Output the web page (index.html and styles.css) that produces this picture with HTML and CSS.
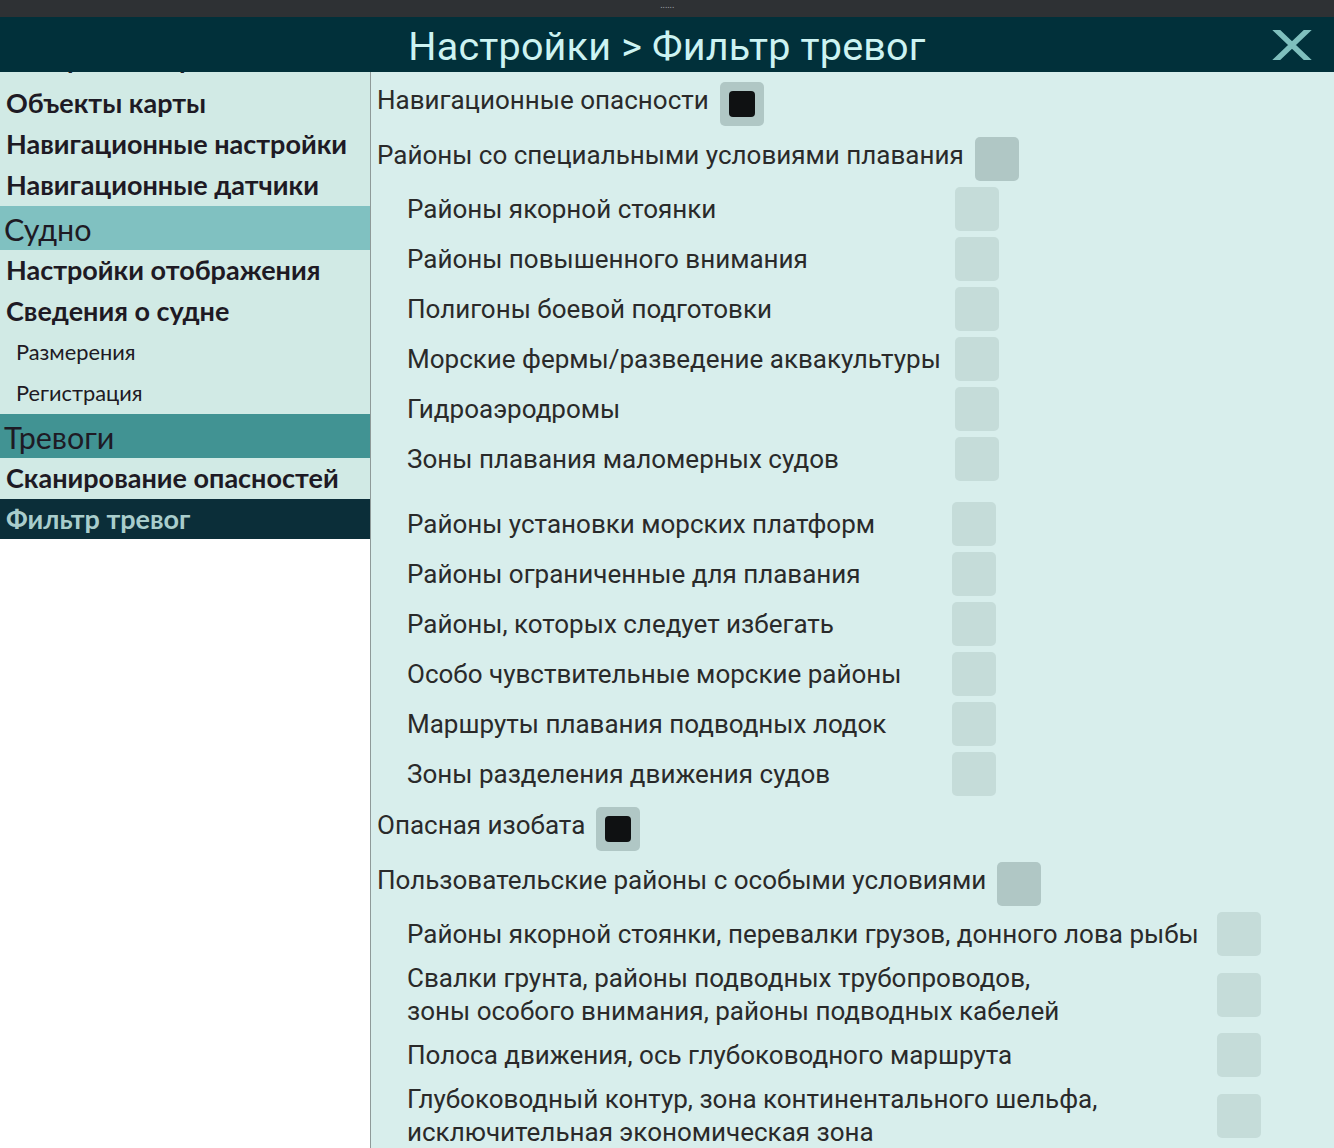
FILE: index.html
```html
<!DOCTYPE html>
<html lang="ru">
<head>
<meta charset="utf-8">
<title>Настройки &gt; Фильтр тревог</title>
<link rel="stylesheet" href="styles.css">
</head>
<body>
<div class="app">
  <div class="topstrip"><span class="grip">......</span></div>
  <header class="titlebar">
    <h1 class="title">Настройки &gt; Фильтр тревог</h1>
    <svg class="close" width="40" height="40" viewBox="0 0 40 40" aria-label="Закрыть">
      <defs><clipPath id="xclip"><rect x="0" y="5" width="40" height="30"/></clipPath></defs>
      <path d="M-1 0 L41 40 M41 0 L-1 40" stroke="#7fbfbd" stroke-width="5.5" fill="none" clip-path="url(#xclip)"/>
    </svg>
  </header>
  <div class="body">
    <nav class="sidebar">
      <div class="side-inner">
        <div class="item first">Настройки карты</div>
        <div class="item">Объекты карты</div>
        <div class="item">Навигационные настройки</div>
        <div class="item">Навигационные датчики</div>
        <div class="group g1">Судно</div>
        <div class="item">Настройки отображения</div>
        <div class="item">Сведения о судне</div>
        <div class="sub">Размерения</div>
        <div class="sub">Регистрация</div>
        <div class="group g2">Тревоги</div>
        <div class="item">Сканирование опасностей</div>
        <div class="item active">Фильтр тревог</div>
      </div>
    </nav>
    <main class="content">
      <div class="top-row r1"><span class="lbl">Навигационные опасности</span><span class="cb on"><span class="mark"></span></span></div>
      <div class="top-row r2"><span class="lbl">Районы со специальными условиями плавания</span><span class="cb"></span></div>
      <div class="list l1">
        <span class="lbl">Районы якорной стоянки</span><span class="cb sm"></span>
        <span class="lbl">Районы повышенного внимания</span><span class="cb sm"></span>
        <span class="lbl">Полигоны боевой подготовки</span><span class="cb sm"></span>
        <span class="lbl">Морские фермы/разведение аквакультуры</span><span class="cb sm"></span>
        <span class="lbl">Гидроаэродромы</span><span class="cb sm"></span>
        <span class="lbl">Зоны плавания маломерных судов</span><span class="cb sm"></span>
      </div>
      <div class="list l2">
        <span class="lbl">Районы установки морских платформ</span><span class="cb sm"></span>
        <span class="lbl">Районы ограниченные для плавания</span><span class="cb sm"></span>
        <span class="lbl">Районы, которых следует избегать</span><span class="cb sm"></span>
        <span class="lbl">Особо чувствительные морские районы</span><span class="cb sm"></span>
        <span class="lbl">Маршруты плавания подводных лодок</span><span class="cb sm"></span>
        <span class="lbl">Зоны разделения движения судов</span><span class="cb sm"></span>
      </div>
      <div class="top-row r3"><span class="lbl">Опасная изобата</span><span class="cb on"><span class="mark"></span></span></div>
      <div class="top-row r4"><span class="lbl">Пользовательские районы с особыми условиями</span><span class="cb"></span></div>
      <div class="list l3">
        <span class="lbl">Районы якорной стоянки, перевалки грузов, донного лова рыбы</span><span class="cb sm"></span>
        <span class="lbl">Свалки грунта, районы подводных трубопроводов,<br>зоны особого внимания, районы подводных кабелей</span><span class="cb sm"></span>
        <span class="lbl">Полоса движения, ось глубоководного маршрута</span><span class="cb sm"></span>
        <span class="lbl">Глубоководный контур, зона континентального шельфа,<br>исключительная экономическая зона</span><span class="cb sm"></span>
      </div>
    </main>
  </div>
</div>
</body>
</html>
```

FILE: styles.css
```css
* { box-sizing: border-box; }
html, body { margin: 0; padding: 0; height: 100%; overflow: hidden; }
body { font-family: Roboto, "Noto Sans", sans-serif; background: #d8eeec; }
.app { display: flex; flex-direction: column; height: 1148px; }
.topstrip {
  height: 17px; background: #2e3134; display: flex; justify-content: center;
  align-items: flex-start; padding-top: 1px;
}
.grip { color: #9a9ea2; font-size: 9px; line-height: 9px; letter-spacing: -0.5px; font-family: "DejaVu Sans", sans-serif; }
.titlebar {
  height: 55px; background: #01303a; display: flex; align-items: center;
  justify-content: center; position: relative;
}
.title {
  margin: 0 0 -3px 0; font-weight: 400; font-size: 39.5px; color: #cdf3f2;
  font-family: Roboto, sans-serif; letter-spacing: 0.2px;
}
.close { position: absolute; right: 22px; top: 8px; }
.body { flex: 1; display: flex; min-height: 0; }
.sidebar {
  width: 371px; flex: none; border-right: 1px solid #8f9a99; background: #fff;
  overflow: hidden; font-family: Lato, sans-serif; color: #1e1a24;
}
.side-inner { margin-top: -30px; background: #d1eae5; }
.item {
  height: 41px; line-height: 39px; padding-left: 6px; font-weight: 700; font-size: 27px;
  white-space: nowrap;
}
.item.first { line-height: 33px; }
.item.active { background: #0b2e39; color: #a9cdcc; height: 40px; line-height: 40px; }
.sub { height: 41px; line-height: 40px; padding-left: 16px; font-size: 21.8px; }
.group { height: 44px; line-height: 46px; padding-left: 4px; font-size: 30.5px; }
.g1 { background: #80c1c1; }
.g2 { background: #419393; }
.content {
  flex: 1; padding: 10px 0 0 6px; color: #2a2a2a; font-size: 26px;
  display: flex; flex-direction: column; overflow: hidden;
}
.top-row { display: flex; align-items: center; gap: 11px; height: 44px; }
.top-row .lbl { margin-bottom: 8px; }
.r2 { margin-top: 11px; }
.r3, .r4 { margin-top: 11px; }
.lbl { white-space: nowrap; line-height: 33px; }
.cb {
  width: 44px; height: 44px; border-radius: 5px; background: #b0c7c5; flex: none;
  display: flex; align-items: center; justify-content: center;
}
.cb.sm { background: #c5dcd9; }
.mark { width: 26px; height: 26px; background: #0f1112; border-radius: 4px; }
.list {
  display: grid; padding-left: 30px; row-gap: 6px; align-items: center;
  grid-auto-rows: minmax(44px, auto);
}
.l1 { margin-top: 6px; grid-template-columns: 548px 44px; }
.l2 { margin-top: 21px; grid-template-columns: 545px 44px; }
.l3 { margin-top: 6px; grid-template-columns: 810px 44px; row-gap: 5px; }
.l3 .lbl { margin-top: 1px; }
```
